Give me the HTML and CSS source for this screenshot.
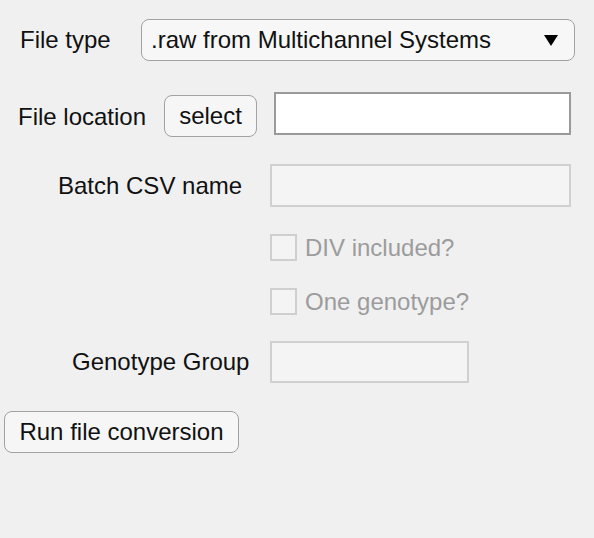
FILE: index.html
```html
<!DOCTYPE html>
<html>
<head>
<meta charset="utf-8">
<link rel="stylesheet" href="styles.css">
</head>
<body>
<div class="panel">
  <div class="row row-type">
    <span class="label lbl-type">File type</span>
    <div class="dropdown">
      <span class="dd-text">.raw from Multichannel Systems</span>
      <span class="caret"></span>
    </div>
  </div>
  <div class="row row-loc">
    <span class="label lbl-loc">File location</span>
    <button class="btn btn-select">select</button>
    <div class="input input-loc"></div>
  </div>
  <div class="row row-csv">
    <span class="label lbl-csv">Batch CSV name</span>
    <div class="input disabled input-csv"></div>
  </div>
  <div class="row row-check row-div">
    <span class="checkbox"></span>
    <span class="check-label">DIV included?</span>
  </div>
  <div class="row row-check row-one">
    <span class="checkbox"></span>
    <span class="check-label">One genotype?</span>
  </div>
  <div class="row row-geno">
    <span class="label lbl-geno">Genotype Group</span>
    <div class="input disabled input-geno"></div>
  </div>
  <div class="row row-run">
    <button class="btn btn-run">Run file conversion</button>
  </div>
</div>
</body>
</html>
```

FILE: styles.css
```css
html, body {
  margin: 0;
  padding: 0;
  background: #f0f0f0;
}
body {
  width: 594px;
  height: 538px;
  overflow: hidden;
  font-family: "Liberation Sans", Arial, Helvetica, sans-serif;
  font-size: 24px;
  color: #111;
}
.panel {
  display: flex;
  flex-direction: column;
}
.row {
  display: flex;
  align-items: center;
}
.label {
  box-sizing: border-box;
  white-space: nowrap;
}
.row-type { margin-top: 19px; height: 42px; }
.lbl-type { padding-left: 20px; width: 141px; }
.dropdown {
  box-sizing: border-box;
  width: 434px;
  height: 42px;
  border: 1.5px solid #a2a2a2;
  border-radius: 8px;
  background: #f7f7f7;
  display: flex;
  align-items: center;
  justify-content: space-between;
  padding: 0 16px 0 9px;
}
.caret {
  width: 0;
  height: 0;
  border-left: 7.5px solid transparent;
  border-right: 7.5px solid transparent;
  border-top: 11px solid #000;
}
.row-loc { margin-top: 31px; height: 43px; align-items: flex-start; }
.lbl-loc { padding-left: 18px; width: 164px; line-height: 50px; }
.btn {
  box-sizing: border-box;
  font: inherit;
  color: #111;
  background: #f6f6f6;
  border: 1.5px solid #a2a2a2;
  border-radius: 8px;
  height: 42px;
  padding: 0;
  margin: 0;
}
.btn-select { width: 93px; margin-top: 3px; }
.input {
  box-sizing: border-box;
  height: 43px;
  background: #fff;
  border: 2px solid #9a9a9a;
}
.input-loc { width: 297px; margin-left: 17px; }
.input.disabled {
  background: #f4f4f4;
  border-color: #d0d0d0;
}
.row-csv { margin-top: 29px; height: 43px; }
.lbl-csv { padding-left: 58px; width: 270px; }
.input-csv { width: 301px; }
.row-check { height: 27px; padding-left: 270px; }
.row-div { margin-top: 27px; }
.row-one { margin-top: 27px; }
.checkbox {
  box-sizing: border-box;
  width: 27px;
  height: 27px;
  border: 2px solid #cfcfcf;
  background: #f4f4f4;
}
.check-label {
  margin-left: 8px;
  color: #9c9c9c;
  white-space: nowrap;
}
.row-geno { margin-top: 26px; height: 42px; }
.lbl-geno { padding-left: 72px; width: 270px; }
.input-geno { width: 199px; height: 42px; }
.row-run { margin-top: 28px; padding-left: 4px; }
.btn-run { width: 235px; }
```
